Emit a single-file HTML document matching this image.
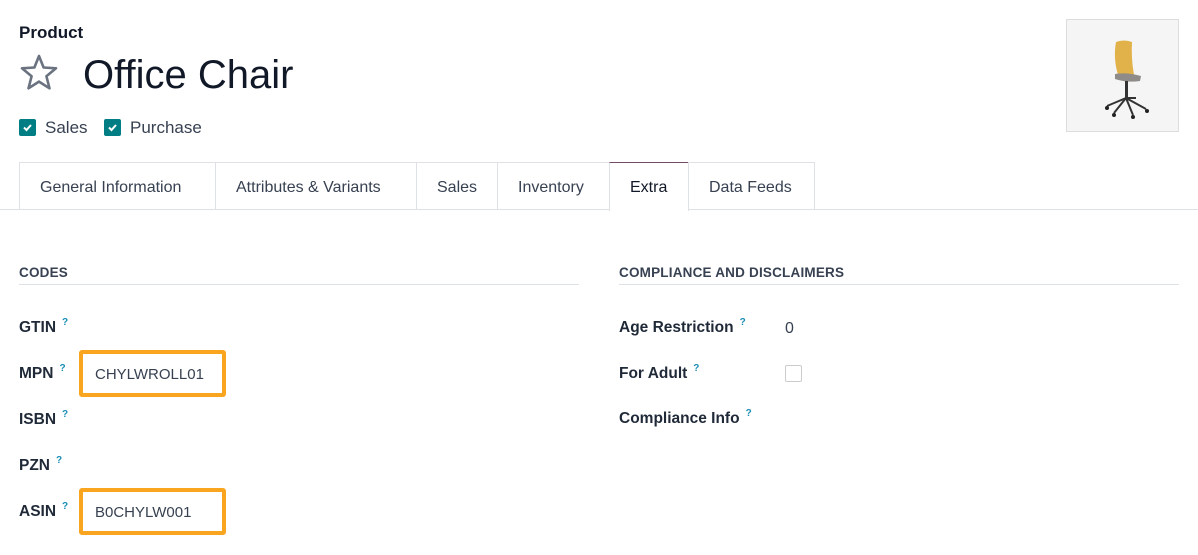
<!DOCTYPE html>
<html><head><style>
*{margin:0;padding:0;box-sizing:border-box}
body{width:1198px;height:555px;background:#fff;font-family:"Liberation Sans",sans-serif;color:#1f2937;position:relative;overflow:hidden}
.a{position:absolute;white-space:nowrap}
.tab{position:absolute;top:162px;height:48px;border:1px solid #dee2e6;border-bottom:none;font-size:16px;color:#374151;padding-left:20px;line-height:49px}
.lbl{font-size:15.5px;font-weight:bold;color:#1f2937}
.q{font-size:10px;color:#1b8db5;vertical-align:top;margin-left:6px;position:relative;top:-2px}
.hd{font-size:13.5px;font-weight:bold;color:#374151;letter-spacing:.2px}
.cb{position:absolute;width:17px;height:17px;background:#017e84;border-radius:2px}
.box{position:absolute;border:4px solid #f9a51f;border-radius:3px;font-size:15px;color:#374151;padding-left:12px;line-height:41px}
</style></head><body>
<div class="a" style="left:19px;top:23px;font-size:17px;font-weight:bold;color:#111827">Product</div>
<svg class="a" style="left:19px;top:53px" width="40" height="38" viewBox="0 0 40 38"><path d="M20 3 L24.6 14.5 L37 15.3 L27.4 23.2 L30.5 35.3 L20 28.6 L9.5 35.3 L12.6 23.2 L3 15.3 L15.4 14.5 Z" fill="none" stroke="#6b7280" stroke-width="2.6" stroke-linejoin="round"/></svg>
<div class="a" style="left:83px;top:53px;font-size:40px;color:#111827">Office Chair</div>
<div class="cb" style="left:19px;top:119px"><svg width="17" height="17"><path d="M5 8.5l2.5 2.5 4.5-5" stroke="#fff" stroke-width="2" fill="none"/></svg></div>
<div class="a" style="left:45px;top:118px;font-size:17px;color:#374151">Sales</div>
<div class="cb" style="left:104px;top:119px"><svg width="17" height="17"><path d="M5 8.5l2.5 2.5 4.5-5" stroke="#fff" stroke-width="2" fill="none"/></svg></div>
<div class="a" style="left:130px;top:118px;font-size:17px;color:#374151">Purchase</div>
<div class="a" style="left:1066px;top:19px;width:113px;height:113px;background:#f5f5f5;border:1px solid #ddd">
<svg width="113" height="113" viewBox="0 0 113 113"><path d="M49 22 Q57 19 65 22 Q64 38 67 55 L51 55 Q46 38 49 22Z" fill="#e2b24a"/><path d="M48 54 Q60 52 74 56 L73 61 Q60 63 48 59Z" fill="#8e8b88"/><rect x="58" y="61" width="3" height="17" fill="#333"/><path d="M59 78 L40 86 M59 78 L47 93 M59 78 L66 95 M59 78 L79 89 M59 78 L69 78" stroke="#333" stroke-width="2"/><circle cx="40" cy="88" r="2" fill="#222"/><circle cx="47" cy="95" r="2" fill="#222"/><circle cx="66" cy="97" r="2" fill="#222"/><circle cx="80" cy="91" r="2" fill="#222"/></svg></div>
<div class="a" style="left:0;top:209px;width:1198px;height:1px;background:#dee2e6"></div>
<div class="tab" style="left:19px;width:197px">General Information</div>
<div class="tab" style="left:215px;width:202px">Attributes &amp; Variants</div>
<div class="tab" style="left:416px;width:82px">Sales</div>
<div class="tab" style="left:497px;width:113px">Inventory</div>
<div class="tab" style="left:609px;width:80px;height:49px;background:#fff;border-top:1px solid #714b67;color:#111827">Extra</div>
<div class="tab" style="left:688px;width:127px">Data Feeds</div>
<div class="a hd" style="left:19px;top:265px">CODES</div>
<div class="a" style="left:19px;top:284px;width:560px;height:1px;background:#dee2e6"></div>
<div class="a hd" style="left:619px;top:265px">COMPLIANCE AND DISCLAIMERS</div>
<div class="a" style="left:619px;top:284px;width:560px;height:1px;background:#dee2e6"></div>
<div class="a lbl" style="left:19px;top:319px">GTIN<span class="q">?</span></div>
<div class="a lbl" style="left:19px;top:365px">MPN<span class="q">?</span></div>
<div class="a lbl" style="left:19px;top:411px">ISBN<span class="q">?</span></div>
<div class="a lbl" style="left:19px;top:457px">PZN<span class="q">?</span></div>
<div class="a lbl" style="left:19px;top:503px">ASIN<span class="q">?</span></div>
<div class="box" style="left:79px;top:350px;width:147px;height:47px">CHYLWROLL01</div>
<div class="box" style="left:79px;top:488px;width:147px;height:47px">B0CHYLW001</div>
<div class="a lbl" style="left:619px;top:319px">Age Restriction<span class="q">?</span></div>
<div class="a" style="left:785px;top:320px;font-size:16px;color:#374151">0</div>
<div class="a lbl" style="left:619px;top:365px">For Adult<span class="q">?</span></div>
<div class="a" style="left:785px;top:365px;width:17px;height:17px;border:1px solid #ccc;border-radius:2px"></div>
<div class="a lbl" style="left:619px;top:410px">Compliance Info<span class="q">?</span></div>
</body></html>
